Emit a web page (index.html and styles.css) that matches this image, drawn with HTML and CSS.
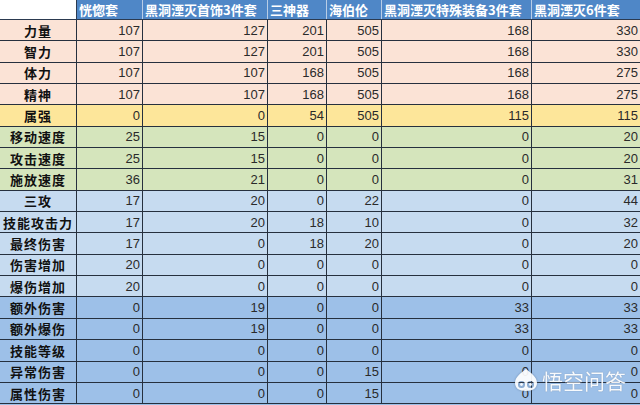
FILE: index.html
```html
<!DOCTYPE html>
<html lang="zh">
<head>
<meta charset="utf-8">
<title>套装属性对比</title>
<link rel="stylesheet" href="styles.css">
</head>
<body>
<div class="sheet">
  <div class="row head">
    <div class="c lab blank"></div>
    <div class="c h">恍惚套</div>
    <div class="c h">黑洞湮灭首饰3件套</div>
    <div class="c h">三神器</div>
    <div class="c h">海伯伦</div>
    <div class="c h">黑洞湮灭特殊装备3件套</div>
    <div class="c h">黑洞湮灭6件套</div>
  </div>

  <div class="row pink"><div class="c lab">力量</div><div class="c n">107</div><div class="c n">127</div><div class="c n">201</div><div class="c n">505</div><div class="c n">168</div><div class="c n">330</div></div>
  <div class="row pink"><div class="c lab">智力</div><div class="c n">107</div><div class="c n">127</div><div class="c n">201</div><div class="c n">505</div><div class="c n">168</div><div class="c n">330</div></div>
  <div class="row pink"><div class="c lab">体力</div><div class="c n">107</div><div class="c n">107</div><div class="c n">168</div><div class="c n">505</div><div class="c n">168</div><div class="c n">275</div></div>
  <div class="row pink"><div class="c lab">精神</div><div class="c n">107</div><div class="c n">107</div><div class="c n">168</div><div class="c n">505</div><div class="c n">168</div><div class="c n">275</div></div>
  <div class="row yellow"><div class="c lab">属强</div><div class="c n">0</div><div class="c n">0</div><div class="c n">54</div><div class="c n">505</div><div class="c n">115</div><div class="c n">115</div></div>

  <div class="row green"><div class="c lab">移动速度</div><div class="c n">25</div><div class="c n">15</div><div class="c n">0</div><div class="c n">0</div><div class="c n">0</div><div class="c n">20</div></div>
  <div class="row green"><div class="c lab">攻击速度</div><div class="c n">25</div><div class="c n">15</div><div class="c n">0</div><div class="c n">0</div><div class="c n">0</div><div class="c n">20</div></div>
  <div class="row green"><div class="c lab">施放速度</div><div class="c n">36</div><div class="c n">21</div><div class="c n">0</div><div class="c n">0</div><div class="c n">0</div><div class="c n">31</div></div>

  <div class="row lblue"><div class="c lab">三攻</div><div class="c n">17</div><div class="c n">20</div><div class="c n">0</div><div class="c n">22</div><div class="c n">0</div><div class="c n">44</div></div>
  <div class="row lblue"><div class="c lab">技能攻击力</div><div class="c n">17</div><div class="c n">20</div><div class="c n">18</div><div class="c n">10</div><div class="c n">0</div><div class="c n">32</div></div>
  <div class="row lblue"><div class="c lab">最终伤害</div><div class="c n">17</div><div class="c n">0</div><div class="c n">18</div><div class="c n">20</div><div class="c n">0</div><div class="c n">20</div></div>
  <div class="row lblue"><div class="c lab">伤害增加</div><div class="c n">20</div><div class="c n">0</div><div class="c n">0</div><div class="c n">0</div><div class="c n">0</div><div class="c n">0</div></div>
  <div class="row lblue"><div class="c lab">爆伤增加</div><div class="c n">20</div><div class="c n">0</div><div class="c n">0</div><div class="c n">0</div><div class="c n">0</div><div class="c n">0</div></div>

  <div class="row mblue"><div class="c lab">额外伤害</div><div class="c n">0</div><div class="c n">19</div><div class="c n">0</div><div class="c n">0</div><div class="c n">33</div><div class="c n">33</div></div>
  <div class="row mblue"><div class="c lab">额外爆伤</div><div class="c n">0</div><div class="c n">19</div><div class="c n">0</div><div class="c n">0</div><div class="c n">33</div><div class="c n">33</div></div>
  <div class="row mblue"><div class="c lab">技能等级</div><div class="c n">0</div><div class="c n">0</div><div class="c n">0</div><div class="c n">0</div><div class="c n">0</div><div class="c n">0</div></div>
  <div class="row mblue"><div class="c lab">异常伤害</div><div class="c n">0</div><div class="c n">0</div><div class="c n">0</div><div class="c n">15</div><div class="c n">0</div><div class="c n">0</div></div>
  <div class="row mblue"><div class="c lab">属性伤害</div><div class="c n">0</div><div class="c n">0</div><div class="c n">0</div><div class="c n">15</div><div class="c n">0</div><div class="c n">0</div></div>

  <div class="watermark">
    <svg class="wm-icon" viewBox="0 0 28 24" width="28" height="24">
      <path fill-rule="evenodd" fill="#ffffff" d="M14 1 C9 5 3 9 3 15 C3 20 7 23 14 23 C21 23 25 20 25 15 C25 9 19 5 14 1 Z M9.5 13 A3.5 3.5 0 1 0 9.5 20 A3.5 3.5 0 1 0 9.5 13 Z M18.5 13 A3.5 3.5 0 1 0 18.5 20 A3.5 3.5 0 1 0 18.5 13 Z"/>
      <circle cx="9.5" cy="16.5" r="1.4" fill="#ffffff"/>
      <circle cx="18.5" cy="16.5" r="1.4" fill="#ffffff"/>
    </svg>
    <span class="wm-text">悟空问答</span>
  </div>
</div>
</body>
</html>
```

FILE: styles.css
```css
html, body {
  margin: 0;
  padding: 0;
  background: #ffffff;
}

.sheet {
  position: relative;
  width: 640px;
  height: 405px;
  overflow: hidden;
  background: #9dc0e8;
}

.row {
  display: grid;
  grid-template-columns: 77px 66px 125px 59px 55px 150px 108px;
  height: 21.35px;
  box-sizing: border-box;
  border-bottom: 1px solid #26303e;
}

.row.head {
  height: 20px;
  background: #4f87c7;
  border-bottom: 1px solid #2b3a50;
}

.c {
  box-sizing: border-box;
  border-right: 1px solid #26303e;
  display: flex;
  align-items: center;
  overflow: hidden;
  white-space: nowrap;
}

.c:last-child {
  border-right: none;
}

.lab {
  justify-content: center;
  font-family: "Noto Sans CJK SC", sans-serif;
  font-weight: 700;
  font-size: 13px;
  letter-spacing: 1px;
  color: #111111;
}

.blank {
  background: #ffffff;
  border-right: 1px solid #2b3a50;
}

.h {
  padding-left: 2px;
  font-family: "Noto Sans CJK SC", sans-serif;
  font-weight: 700;
  font-size: 13px;
  color: #ffffff;
  border-right: 1px solid #b8cde6;
}

.n {
  justify-content: flex-end;
  padding-right: 2px;
  font-family: "Liberation Sans", Arial, sans-serif;
  font-size: 13px;
  color: #2a2a2a;
}

.pink { background: #fbe3d6; }
.yellow { background: #fde69a; }
.green { background: #d5e5bc; }
.lblue { background: #c6dbf0; }
.mblue { background: #9dc0e8; }

.watermark {
  position: absolute;
  left: 512px;
  top: 368px;
  display: flex;
  align-items: center;
  gap: 2px;
  opacity: 0.92;
}

.wm-icon {
  display: block;
  filter: drop-shadow(0 0 1px rgba(60, 80, 110, 0.5));
}

.wm-text {
  font-family: "Noto Sans CJK SC", sans-serif;
  font-size: 21px;
  font-weight: 400;
  color: #ffffff;
  line-height: 24px;
  text-shadow: 0 0 1px rgba(60, 80, 110, 0.6);
}
```
